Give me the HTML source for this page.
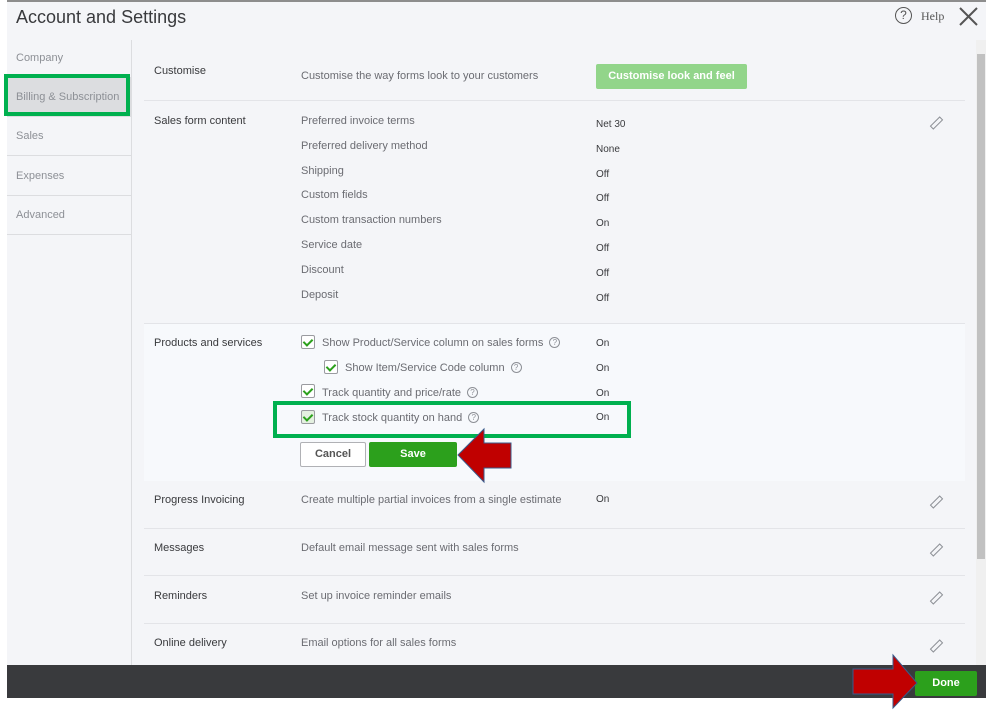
<!DOCTYPE html><html><head><style>
body{margin:0;width:999px;height:710px;background:#fff;position:relative;overflow:hidden;font-family:"Liberation Sans",sans-serif;font-size:11px;color:#393a3d}
.a{position:absolute;white-space:nowrap}
.g{color:#6b6c72}
.hl{position:absolute;left:144px;width:821px;height:1px;background:#e3e4e8}
.cb{position:absolute;width:12px;height:12px;border:1px solid #9a9ba0;background:#fff;border-radius:2px}
.cb:after{content:"";position:absolute;left:3px;top:1px;width:4px;height:7px;border:solid #2ca01c;border-width:0 2px 2px 0;transform:rotate(45deg)}
.q{display:inline-block;width:9px;height:9px;border:1px solid #8d9096;border-radius:50%;font-size:8px;line-height:9px;text-align:center;color:#8d9096;margin-left:6px;vertical-align:1px}
.pen{position:absolute;width:3px;height:12px;border:1px solid #8d9096;transform:rotate(45deg)}
.nav{position:absolute;left:7px;width:124px;height:38px;border-bottom:1px solid #dcdde0;color:#8d9096;font-size:11px;line-height:38px;text-indent:9px}
</style></head><body>
<div class="a" style="left:0;top:0;width:986px;height:665px;background:#f4f5f8;border-top:2px solid #8d8d8d;box-sizing:border-box"></div>
<div class="a" style="left:0;top:0;width:7px;height:710px;background:#fff"></div>
<div class="a" style="left:16px;top:7px;font-size:18px;color:#393a3d">Account and Settings</div>
<div class="a" style="left:895px;top:7px;width:15px;height:15px;border:1.5px solid #555;border-radius:50%;text-align:center;font-size:12px;line-height:15px;color:#555">?</div>
<div class="a" style="left:921px;top:9px;font-family:'Liberation Serif',serif;font-size:12px;color:#555">Help</div>
<svg class="a" style="left:958px;top:6px" width="21" height="21"><path d="M2 2L19 19M19 2L2 19" stroke="#555" stroke-width="2"/></svg>
<div class="a" style="left:131px;top:40px;width:1px;height:625px;background:#dcdde0"></div>
<div class="nav" style="top:39px">Company</div>
<div class="nav" style="top:78px;background:#dcdde0">Billing &amp; Subscription</div>
<div class="nav" style="top:117px">Sales</div>
<div class="nav" style="top:157px">Expenses</div>
<div class="nav" style="top:196px">Advanced</div>
<div class="a" style="left:4px;top:74px;width:126px;height:42px;border:4px solid #00b04f;box-sizing:border-box"></div>
<div class="a" style="left:976px;top:40px;width:10px;height:625px;background:#f0f0f0"></div>
<div class="a" style="left:977px;top:54px;width:8px;height:505px;background:#c1c1c1"></div>
<div class="a" style="left:154px;top:65px">Customise</div>
<div class="a g" style="left:301px;top:70px">Customise the way forms look to your customers</div>
<div class="a" style="left:596px;top:64px;width:151px;height:25px;background:#92d58a;color:#fff;font-weight:bold;text-align:center;line-height:25px;border-radius:2px">Customise look and feel</div>
<div class="hl" style="top:100px"></div>
<div class="a" style="left:154px;top:115px">Sales form content</div>
<div class="a g" style="left:301px;top:109px;line-height:24.8px">Preferred invoice terms<br>Preferred delivery method<br>Shipping<br>Custom fields<br>Custom transaction numbers<br>Service date<br>Discount<br>Deposit</div>
<div class="a" style="left:596px;top:113px;line-height:24.8px;font-size:10px">Net 30<br>None<br>Off<br>Off<br>On<br>Off<br>Off<br>Off</div>
<div class="pen" style="left:934px;top:116px"></div>
<div class="a" style="left:144px;top:323px;width:821px;height:157px;background:#f7f9fc;border-top:1px solid #e3e4e8"></div>
<div class="a" style="left:154px;top:337px">Products and services</div>
<div class="cb" style="left:301px;top:335px"></div><div class="a g" style="left:322px;top:337px">Show Product/Service column on sales forms<span class="q">?</span></div>
<div class="cb" style="left:324px;top:360px"></div><div class="a g" style="left:345px;top:362px">Show Item/Service Code column<span class="q">?</span></div>
<div class="cb" style="left:301px;top:384px"></div><div class="a g" style="left:322px;top:387px">Track quantity and price/rate<span class="q">?</span></div>
<div class="cb" style="left:301px;top:410px;background:#e4f0e0"></div><div class="a g" style="left:322px;top:412px">Track stock quantity on hand<span class="q">?</span></div>
<div class="a" style="left:596px;top:332px;line-height:24.8px;font-size:10px">On<br>On<br>On<br>On</div>
<div class="a" style="left:273px;top:401px;width:358px;height:37px;border:4px solid #00b04f;box-sizing:border-box"></div>
<div class="a" style="left:300px;top:442px;width:66px;height:25px;border:1px solid #b0b1b5;background:#fff;box-sizing:border-box;text-align:center;line-height:23px;font-weight:bold;color:#555;border-radius:2px">Cancel</div>
<div class="a" style="left:369px;top:442px;width:88px;height:25px;background:#2ca01c;color:#fff;font-weight:bold;text-align:center;line-height:25px;border-radius:2px">Save</div>
<svg class="a" style="left:455px;top:426px" width="60" height="60"><path d="M3 29L29 3V17H56V42H29V56Z" fill="#c00000" stroke="#3a5a8a"/></svg>
<div class="a" style="left:154px;top:494px">Progress Invoicing</div>
<div class="a g" style="left:301px;top:494px">Create multiple partial invoices from a single estimate</div>
<div class="a" style="left:596px;top:494px;font-size:10px">On</div>
<div class="pen" style="left:934px;top:495px"></div>
<div class="hl" style="top:528px"></div>
<div class="a" style="left:154px;top:542px">Messages</div>
<div class="a g" style="left:301px;top:542px">Default email message sent with sales forms</div>
<div class="pen" style="left:934px;top:543px"></div>
<div class="hl" style="top:575px"></div>
<div class="a" style="left:154px;top:590px">Reminders</div>
<div class="a g" style="left:301px;top:590px">Set up invoice reminder emails</div>
<div class="pen" style="left:934px;top:591px"></div>
<div class="hl" style="top:623px"></div>
<div class="a" style="left:154px;top:637px">Online delivery</div>
<div class="a g" style="left:301px;top:637px">Email options for all sales forms</div>
<div class="pen" style="left:934px;top:639px"></div>
<div class="a" style="left:7px;top:665px;width:979px;height:33px;background:#393a3d"></div>
<div class="a" style="left:915px;top:671px;width:62px;height:25px;background:#2ca01c;color:#fff;font-weight:bold;text-align:center;line-height:25px;border-radius:2px">Done</div>
<svg class="a" style="left:850px;top:652px" width="70" height="58"><path d="M3 17H43V3L67 31L43 56V42H3Z" fill="#c00000" stroke="#3a5a8a"/></svg>
</body></html>
